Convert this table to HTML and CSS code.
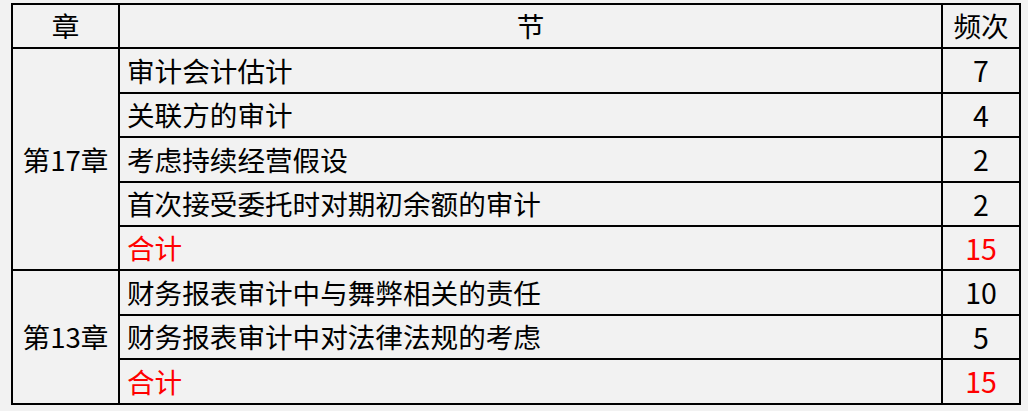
FILE: index.html
```html
<!DOCTYPE html>
<html lang="zh-CN">
<head>
<meta charset="utf-8">
<link rel="stylesheet" href="styles.css">
</head>
<body>
<table class="freq">
  <colgroup>
    <col class="c-ch">
    <col class="c-sec">
    <col class="c-num">
  </colgroup>
  <thead>
    <tr><th>章</th><th>节</th><th>频次</th></tr>
  </thead>
  <tbody>
    <tr><td class="ch" rowspan="5">第17章</td><td class="sec">审计会计估计</td><td class="num">7</td></tr>
    <tr><td class="sec">关联方的审计</td><td class="num">4</td></tr>
    <tr><td class="sec">考虑持续经营假设</td><td class="num">2</td></tr>
    <tr><td class="sec">首次接受委托时对期初余额的审计</td><td class="num">2</td></tr>
    <tr class="total"><td class="sec">合计</td><td class="num">15</td></tr>
    <tr><td class="ch" rowspan="3">第13章</td><td class="sec">财务报表审计中与舞弊相关的责任</td><td class="num">10</td></tr>
    <tr><td class="sec">财务报表审计中对法律法规的考虑</td><td class="num">5</td></tr>
    <tr class="total"><td class="sec">合计</td><td class="num">15</td></tr>
  </tbody>
</table>
</body>
</html>
```
FILE: styles.css
```css
html, body {
  margin: 0;
  background: #f2f2f2;
}
body {
  padding: 3px 0 0 11px;
  font-family: "Noto Sans CJK SC", "Microsoft YaHei", sans-serif;
  color: #000;
}
.freq {
  border-collapse: collapse;
  table-layout: fixed;
  width: 1008px;
  font-size: 27.6px;
}
.c-ch { width: 107px; }
.c-sec { width: 823px; }
.c-num { width: 78px; }
.freq th, .freq td {
  border: 2px solid #000;
  height: 42.4px;
  padding: 0;
  font-weight: normal;
  line-height: 1;
  vertical-align: middle;
}
.freq th { text-align: center; }
.ch { text-align: center; }
.sec { padding-left: 7px !important; text-align: left; }
.num { text-align: center; font-size: 28.5px; }
.total td { color: #ff0000; }
```
